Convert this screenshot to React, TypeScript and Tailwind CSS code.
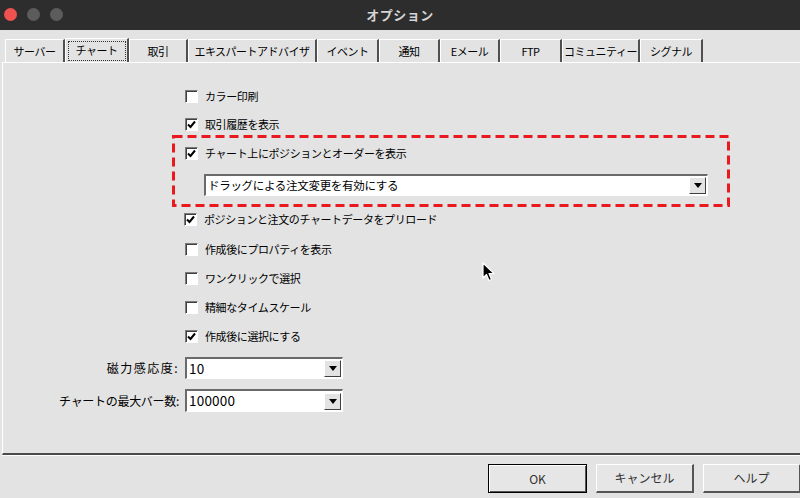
import React from "react";

const font = { fontFamily: '"Noto Sans CJK JP", "Noto Sans", sans-serif' };

function Check({ checked }: { checked: boolean }) {
  return (
    <div className="w-[13px] h-[13px] bg-white border-t border-l border-t-[#7a7a7a] border-l-[#7a7a7a] border-b border-r border-b-white border-r-white shadow-[inset_1px_1px_0_#404040] flex items-center justify-center shrink-0">
      {checked && (
        <svg width="9" height="9" viewBox="0 0 9 9">
          <path d="M1 4.5 L3.5 7 L8 1.5" stroke="#000" strokeWidth="2" fill="none" />
        </svg>
      )}
    </div>
  );
}

function Row({ checked, label, h, mt = 0 }: { checked: boolean; label: string; h: number; mt?: number }) {
  return (
    <div className="flex items-center" style={{ height: h, marginTop: mt }}>
      <Check checked={checked} />
      <span className="ml-[7px] text-[11px] tracking-[-0.4px] text-black leading-none whitespace-nowrap">{label}</span>
    </div>
  );
}

function Arrow() {
  return (
    <div className="w-[17px] h-[17px] bg-[#e3e3e3] border-t border-l border-t-white border-l-white border-b border-r border-b-[#404040] border-r-[#404040] flex items-center justify-center shrink-0">
      <svg width="8" height="5" viewBox="0 0 8 5">
        <path d="M0 0 H8 L4 5 Z" fill="#000" />
      </svg>
    </div>
  );
}

function Combo({ value, w, h, num }: { value: string; w: number; h: number; num?: boolean }) {
  return (
    <div
      className="bg-white border-t-2 border-l-2 border-t-[#6a6a6a] border-l-[#6a6a6a] border-b border-r border-b-white border-r-white flex items-center justify-between pr-[1px] pl-[2px]"
      style={{ width: w, height: h }}
    >
      <span
        className={
          "text-black leading-none whitespace-nowrap " +
          (num ? "text-[13.5px] tracking-[0.2px]" : "text-[11.5px] tracking-[-0.3px]")
        }
      >
        {value}
      </span>
      <Arrow />
    </div>
  );
}

const tabs = [
  { label: "サーバー", w: 60 },
  { label: "チャート", w: 64, sel: true },
  { label: "取引", w: 59 },
  { label: "エキスパートアドバイザ", w: 129 },
  { label: "イベント", w: 62 },
  { label: "通知", w: 61 },
  { label: "Eメール", w: 60 },
  { label: "FTP", w: 62 },
  { label: "コミュニティー", w: 78 },
  { label: "シグナル", w: 63 },
];

export default function App() {
  return (
    <div className="w-[800px] h-[498px] bg-[#e3e3e3] flex flex-col overflow-hidden relative" style={font}>
      {/* Title bar */}
      <div className="h-[30px] bg-[#2d2d2d] relative flex items-center justify-center shrink-0">
        <div className="absolute left-[4px] top-[8px] flex gap-[10px]">
          <div className="w-[13px] h-[13px] rounded-full bg-[#f0524f]" />
          <div className="w-[13px] h-[13px] rounded-full bg-[#5c5c5c]" />
          <div className="w-[13px] h-[13px] rounded-full bg-[#5c5c5c]" />
        </div>
        <span className="text-[13px] font-bold text-[#d4d4d4] tracking-[0.5px]">オプション</span>
      </div>

      {/* Tabs */}
      <div className="h-[32px] flex items-end pl-[5px] shrink-0">
        {tabs.map((t) => (
          <div
            key={t.label}
            className={
              "flex items-center justify-center border-l border-l-white border-t border-t-white border-r-2 border-r-[#505050] text-[11px] tracking-[-0.5px] text-black leading-none whitespace-nowrap " +
              (t.sel ? "h-[24px]" : "h-[23px]")
            }
            style={{ width: t.w }}
          >
            {t.sel ? (
              <div className="border border-dotted border-[#333] h-[20px] w-[58px] flex items-center justify-center">
                {t.label}
              </div>
            ) : (
              t.label
            )}
          </div>
        ))}
      </div>

      {/* Panel */}
      <div className="h-[393px] ml-[2px] border-t border-t-white border-l border-l-white border-b-2 border-b-[#4a4a4a] shrink-0 flex flex-col">
        <div className="flex flex-col pl-[182px] pt-[19px]">
          <Row checked={false} label="カラー印刷" h={28} />
          <Row checked={true} label="取引履歴を表示" h={28} />
          <Row checked={true} label="チャート上にポジションとオーダーを表示" h={30} />
          <div className="ml-[19px] mt-[6px]">
            <Combo value="ドラッグによる注文変更を有効にする" w={504} h={22} />
          </div>
          <div className="-ml-[1px]">
            <Row checked={true} label="ポジションと注文のチャートデータをプリロード" h={30} mt={8} />
          </div>
          <Row checked={false} label="作成後にプロパティを表示" h={30} />
          <Row checked={false} label="ワンクリックで選択" h={29} />
          <Row checked={false} label="精細なタイムスケール" h={29} />
          <Row checked={true} label="作成後に選択にする" h={29} />
        </div>
        <div className="flex items-center mt-[6px]">
          <div className="w-[176px] text-right text-[12px] tracking-[1.5px] text-black leading-none">磁力感応度:</div>
          <div className="ml-[6px]">
            <Combo value="10" w={158} h={22} num />
          </div>
        </div>
        <div className="flex items-center mt-[10px]">
          <div className="w-[176px] text-right text-[12px] tracking-[-0.3px] text-black leading-none">チャートの最大バー数:</div>
          <div className="ml-[6px]">
            <Combo value="100000" w={158} h={23} num />
          </div>
        </div>
      </div>
      <div className="h-px bg-white ml-[2px]" />

      {/* Buttons */}
      <div className="flex gap-[9px] pl-[488px] pt-[8px]">
        <div className="w-[99px] h-[29px] shrink-0 border border-black bg-[#e6e6e6] flex items-center justify-center shadow-[inset_1px_1px_0_#fff,inset_-1px_-1px_0_#555]">
          <span className="text-[12px] text-[#333]">OK</span>
        </div>
        <div className="w-[98px] h-[29px] shrink-0 bg-[#e6e6e6] border-t border-l border-t-white border-l-white border-b-2 border-r-2 border-b-[#555] border-r-[#555] flex items-center justify-center">
          <span className="text-[12px] text-[#333]">キャンセル</span>
        </div>
        <div className="w-[98px] h-[29px] shrink-0 bg-[#e6e6e6] border-t border-l border-t-white border-l-white border-b-2 border-r-2 border-b-[#555] border-r-[#555] flex items-center justify-center">
          <span className="text-[12px] text-[#333]">ヘルプ</span>
        </div>
      </div>

      {/* Red dashed annotation */}
      <svg className="absolute left-[172px] top-[135px]" width="558" height="72" viewBox="0 0 558 72">
        <rect x="1.5" y="1.5" width="555" height="69" fill="none" stroke="#e8191f" strokeWidth="3" strokeDasharray="9 5" />
      </svg>

      {/* Mouse cursor */}
      <svg className="absolute left-[482px] top-[262px]" width="14" height="22" viewBox="0 0 14 22">
        <path d="M1 1 L1 16 L4.5 12.5 L7 18.5 L9.5 17.5 L7 11.5 L12 11.5 Z" fill="#000" stroke="#fff" strokeWidth="1.2" strokeLinejoin="round" />
      </svg>
    </div>
  );
}
